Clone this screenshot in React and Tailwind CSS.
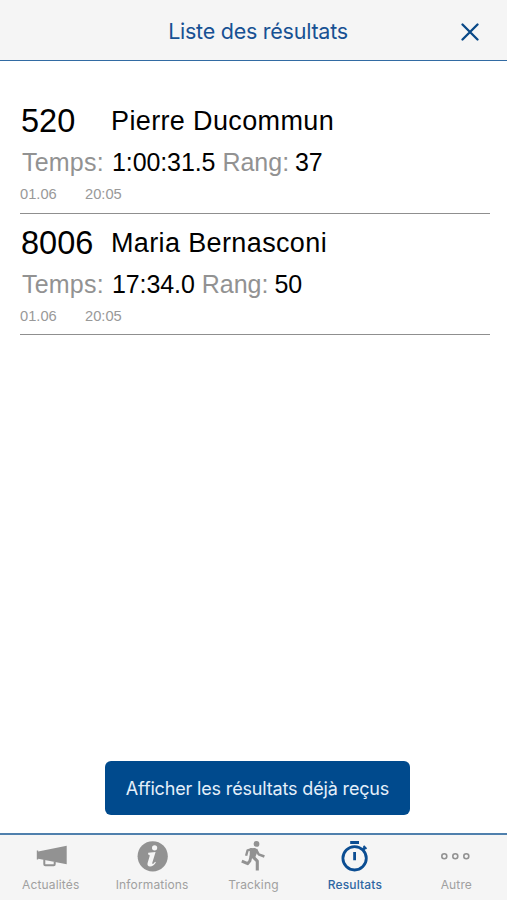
const results = [
  { bib: "520", name: "Pierre Ducommun", time: "1:00:31.5", rank: "37", date: "01.06", hour: "20:05" },
  { bib: "8006", name: "Maria Bernasconi", time: "17:34.0", rank: "50", date: "01.06", hour: "20:05" },
];

function MegaphoneIcon() {
  return (
    <svg width="32" height="32" viewBox="0 0 32 32">
      <path d="M1.8 10.6h1.4v.8L31.7 5.8v18.4L3.2 18.8v.8H1.8z" fill="currentColor" />
      <path d="M9.3 19.5v4.8q0 1 1 1h8.4q1 0 1-1v-2.5" fill="none" stroke="currentColor" strokeWidth="2" />
    </svg>
  );
}

function InfoIcon() {
  return (
    <svg width="32" height="32" viewBox="0 0 32 32">
      <circle cx="16.7" cy="16.3" r="15.1" fill="currentColor" />
      <circle cx="18.6" cy="7.8" r="2.6" fill="#f5f5f5" />
      <path
        d="M12.2 12.8l7.4-.8-3.3 10.8c-.3 1.2.5 1.4 1.3.6l1.5-1.6.8.6c-1.8 2.7-3.6 4-5.8 4-2.1 0-3.1-1.4-2.5-3.4l2-6.8c.3-1.1-.1-1.5-1.5-1.7z"
        fill="#f5f5f5"
      />
    </svg>
  );
}

function RunnerIcon() {
  return (
    <svg width="32" height="32" viewBox="0 0 32 32" fill="none" stroke="currentColor" strokeLinejoin="round">
      <circle cx="18.5" cy="3.9" r="2.9" fill="currentColor" stroke="none" />
      <path d="M11.8 8.3l5.2-.4 2.2 1.4.3 2.2-2.3 6.1-5.5-.3z" fill="currentColor" stroke="none" />
      <path d="M14 9.1l-4.4 1.2-1.5 5.4" strokeWidth="2.4" />
      <path d="M18 9.2l2.6 5.1 5.8 2.2" strokeWidth="2.5" />
      <path d="M14.6 16.4l4.7 4.8v9.4" strokeWidth="3.1" />
      <path d="M13.2 15.5l-1.3 5.3-2.2 2.9-5.9-2.5" strokeWidth="2.9" />
    </svg>
  );
}

function StopwatchIcon() {
  return (
    <svg width="32" height="32" viewBox="0 0 32 32" fill="none" stroke="currentColor" strokeWidth="2.8">
      <circle cx="15.6" cy="18.3" r="11.7" />
      <path d="M11.2 2.5h8.8M15.6 12v8.2" />
      <path d="M23.8 9.8l2.1-2.1" strokeWidth="3" />
      <path d="M24.6 5.9l2.9 2.9" strokeWidth="1.8" />
    </svg>
  );
}

function MoreIcon() {
  return (
    <svg width="32" height="32" viewBox="0 0 32 32" fill="none" stroke="currentColor" strokeWidth="1.6">
      <circle cx="4.3" cy="16.2" r="2.5" />
      <circle cx="15.3" cy="16.2" r="2.5" />
      <circle cx="26.3" cy="16.2" r="2.5" />
    </svg>
  );
}

const tabs = [
  { label: "Actualités", icon: MegaphoneIcon },
  { label: "Informations", icon: InfoIcon },
  { label: "Tracking", icon: RunnerIcon },
  { label: "Resultats", icon: StopwatchIcon, active: true },
  { label: "Autre", icon: MoreIcon },
];

function ResultRow({ result }) {
  return (
    <li className="h-[121.5px] border-b border-[#8f8f8f] whitespace-nowrap">
      <div className="flex h-[50px] pt-[9px] text-black">
        <span className="w-[91px] pl-px text-[32.5px] leading-[40px]">{result.bib}</span>
        <span className="text-[27px] leading-[40px] tracking-[0.37px]">{result.name}</span>
      </div>
      <div className="flex items-baseline h-[38px] pt-[4px] text-[25px] leading-[32px] text-[#929292]">
        <span className="w-[92px] pl-[2px] tracking-[0.2px]">Temps:</span>
        <span className="text-black mr-[7px] tracking-[-0.1px]">{result.time}</span>
        <span className="mr-[6px]">Rang:</span>
        <span className="text-black tracking-[-0.2px]">{result.rank}</span>
      </div>
      <div className="flex pt-[5.4px] text-[14.7px] leading-[18px] text-[#999]">
        <span className="w-[65px]">{result.date}</span>
        <span>{result.hour}</span>
      </div>
    </li>
  );
}

export default function App() {
  return (
    <div className="h-screen flex flex-col bg-white font-['Inter',sans-serif]">
      <header className="h-[61px] shrink-0 grid grid-cols-[1fr_auto_1fr] items-center bg-[#f5f5f5] border-b-[1.5px] border-[#326ba3] text-[#175193]">
        <span />
        <h1 className="pt-[2px] pl-[9px] text-[21.5px] leading-7 tracking-[-0.25px]">Liste des résultats</h1>
        <button className="justify-self-end mr-[28px] mt-[4px]" aria-label="Fermer">
          <svg width="18" height="18" viewBox="0 0 18 18" fill="none" stroke="#084887" strokeWidth="2.3" strokeLinecap="round">
            <path d="M1.5 1.5l15 15M16.5 1.5l-15 15" />
          </svg>
        </button>
      </header>

      <main className="flex-1 flex flex-col pl-[20px] pr-[17px] pt-[31px] font-['Liberation_Sans',Arial,sans-serif]">
        <ul>
          {results.map((r) => (
            <ResultRow key={r.bib} result={r} />
          ))}
        </ul>
        <button className="mt-auto mb-[18px] ml-[85px] w-[305px] h-[54px] rounded-[6px] bg-[#004a8d] text-[#e4effa] text-[18px] tracking-[-0.16px] whitespace-nowrap font-['Inter',sans-serif]">
          Afficher les résultats déjà reçus
        </button>
      </main>

      <nav className="h-[67px] shrink-0 flex bg-[#f5f5f5] border-t-2 border-[#4f80ad]">
        {tabs.map(({ label, icon: Icon, active }) => (
          <button
            key={label}
            className={`flex-1 basis-0 flex flex-col items-center pt-[5px] ${active ? "text-[#0b4d92]" : "text-[#929292]"}`}
          >
            <Icon />
            <span
              className={`mt-[5px] text-[12px] leading-[16px] tracking-[0.15px] ${active ? "font-medium text-[#2e67a3]" : "text-[#a0a0a0]"}`}
            >
              {label}
            </span>
          </button>
        ))}
      </nav>
    </div>
  );
}
